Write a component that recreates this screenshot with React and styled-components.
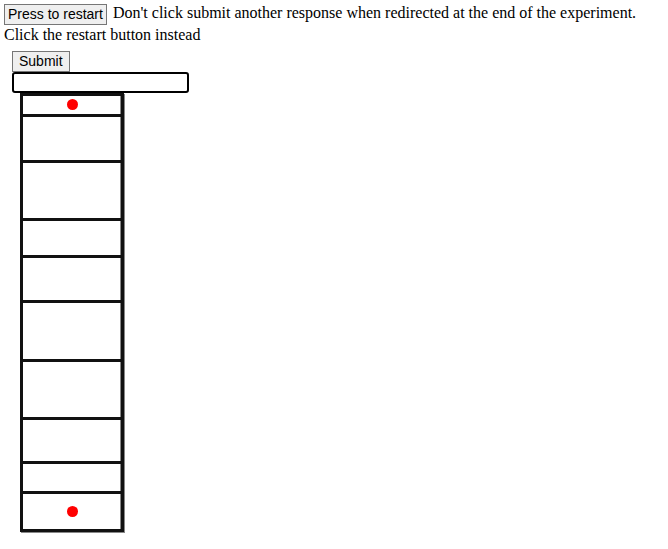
import React from "react";
import styled, { createGlobalStyle } from "styled-components";

const Global = createGlobalStyle`
  body {
    margin: 0;
    background: #fff;
    font-family: "Liberation Serif", "Times New Roman", serif;
    font-size: 16px;
    color: #000;
  }
`;

const Page = styled.div`
  padding: 3px 4px 4px;
`;

const Line = styled.div`
  line-height: 19px;
`;

const Btn = styled.button`
  font-family: "Liberation Sans", Arial, sans-serif;
  font-size: 14px;
  height: 21px;
  padding: 1px ${p => p.$px || 6}px;
  margin: 0 2px 0 0;
  background: #efefef;
  border: 1px solid #767676;
  border-radius: 0;
  color: #000;
  vertical-align: middle;
`;

const Block = styled.div`
  margin: 7px 0 0 8px;
  display: flex;
  flex-direction: column;
  align-items: flex-start;
`;

const Field = styled.input`
  width: 177px;
  height: 21px;
  box-sizing: border-box;
  border: 2px solid #000;
  border-radius: 3px;
  outline: none;
  padding: 0 3px;
  font-size: 13px;
`;

const Column = styled.div`
  margin-left: 8px;
  width: 104px;
  box-sizing: border-box;
  border: 3px solid #111;
  box-shadow: 1px 1px 0 #888;
  display: flex;
  flex-direction: column;
`;

const Cell = styled.div`
  height: ${p => p.$h}px;
  border-top: ${p => (p.$first ? "none" : "3px solid #111")};
  box-shadow: inset -1px 0 0 #888;
  display: flex;
  align-items: center;
  justify-content: center;
`;

const Dot = styled.span`
  width: 11px;
  height: 11px;
  border-radius: 50%;
  background: #f00;
`;

const rows = [
  { h: 18, dot: true },
  { h: 43 },
  { h: 55 },
  { h: 34 },
  { h: 42 },
  { h: 56 },
  { h: 55 },
  { h: 41 },
  { h: 27 },
  { h: 35, dot: true },
];

export default function App() {
  return (
    <>
      <Global />
      <Page>
        <Line>
          <Btn $px={3}>Press to restart</Btn> Don't click submit another response when redirected at the end of the experiment.
        </Line>
        <Line>Click the restart button instead</Line>
        <Block>
          <Btn>Submit</Btn>
          <Field type="text" />
          <Column>
            {rows.map((r, i) => (
              <Cell key={i} $h={r.h} $first={i === 0}>
                {r.dot && <Dot />}
              </Cell>
            ))}
          </Column>
        </Block>
      </Page>
    </>
  );
}
